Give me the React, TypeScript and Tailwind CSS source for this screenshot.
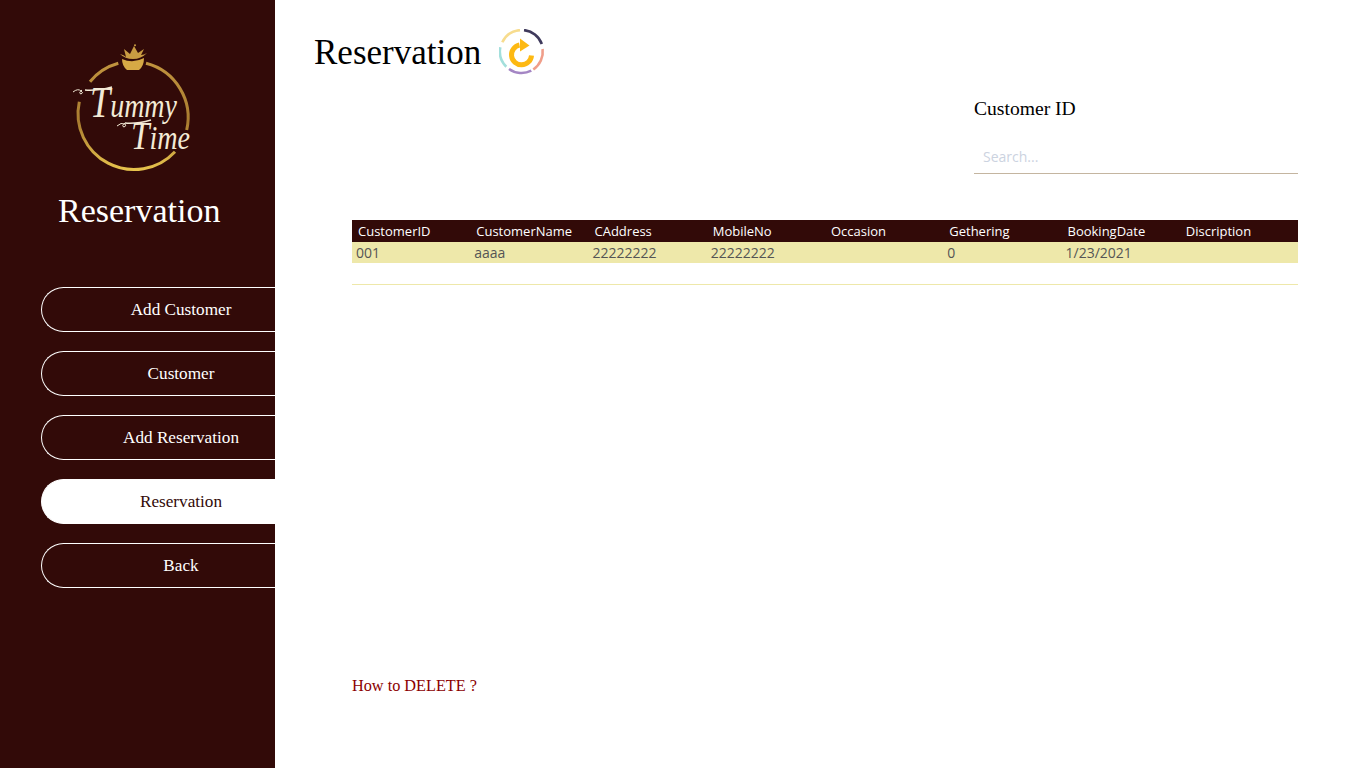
const serif = "font-['Liberation_Serif',serif]";

const navItems = [
  { label: "Add Customer", active: false },
  { label: "Customer", active: false },
  { label: "Add Reservation", active: false },
  { label: "Reservation", active: true },
  { label: "Back", active: false },
];

const headers = ["CustomerID", "CustomerName", "CAddress", "MobileNo", "Occasion", "Gethering", "BookingDate", "Discription"];
const row = ["001", "aaaa", "22222222", "22222222", "", "0", "1/23/2021", ""];

const Logo = () => {
  const font = "'Liberation Serif', serif";
  return (
    <svg width="134" height="132" viewBox="0 0 134 132" className="block">
      <defs>
        <linearGradient id="gold" gradientUnits="userSpaceOnUse" x1="0" y1="15" x2="0" y2="130">
          <stop offset="0" stopColor="#c2953f" />
          <stop offset="0.55" stopColor="#a97c30" />
          <stop offset="1" stopColor="#ecc94f" />
        </linearGradient>
      </defs>
      <path d="M47.3 19.3A56 56 0 0 0 19 37.7" fill="none" stroke="url(#gold)" strokeWidth="3" />
      <path d="M75 19.3A56 56 0 0 1 115.7 86" fill="none" stroke="url(#gold)" strokeWidth="3" />
      <path d="M104 107.7A56 56 0 0 1 8.3 57.7" fill="none" stroke="url(#gold)" strokeWidth="3" />
      <path d="M49 10Q53 11 55 13L53 5L59 10L63 2L67 9L73 5L70 11Q73 11 76 9Q70 15 62 15Q54 15 49 10z" fill="#c99c42" />
      <circle cx="64" cy="1.2" r="1" fill="#c99c42" />
      <path d="M51 15Q62 20 73 14Q73 22 68 26L56 26Q51 22 51 15z" fill="#d6a945" />

      <path d="M14 46Q26 47 41 43" fill="none" stroke="#f3ead6" strokeWidth="1.4" />
      <path d="M2 48Q7 44 10 47Q13 49 10 50Q7 49 11 46" fill="none" stroke="#f3ead6" strokeWidth="1" />
      <text x="19" y="73" fontFamily={font} fontStyle="italic" fill="#f3ead6" textLength="87" lengthAdjust="spacingAndGlyphs">
        <tspan fontSize="44">T</tspan>
        <tspan fontSize="34">ummy</tspan>
      </text>

      <path d="M54 79Q66 80 80 76" fill="none" stroke="#f3ead6" strokeWidth="1.4" />
      <path d="M46 82Q50 78 54 80Q56 82 53 83Q50 82 54 79" fill="none" stroke="#f3ead6" strokeWidth="1" />
      <text x="60" y="105" fontFamily={font} fontStyle="italic" fill="#f3ead6" textLength="59" lengthAdjust="spacingAndGlyphs">
        <tspan fontSize="40">T</tspan>
        <tspan fontSize="34">ime</tspan>
      </text>
    </svg>
  );
};

const RefreshIcon = () => (
  <svg width="46" height="46" viewBox="0 0 46 46" fill="none" className="block">
    <path d="M3.3 13.3A21.5 21.5 0 0 1 21 1.1" stroke="#f7dc8e" strokeWidth="2.6" />
    <path d="M25 1.1A21.5 21.5 0 0 1 42.8 15" stroke="#3f3a5c" strokeWidth="2.6" />
    <path d="M43.6 20A21.5 21.5 0 0 1 34.3 40.5" stroke="#f09e8a" strokeWidth="2.6" />
    <path d="M32.3 41.7A21.5 21.5 0 0 1 10 40" stroke="#a486c4" strokeWidth="2.6" />
    <path d="M7.3 37.7A21.5 21.5 0 0 1 1.3 18.3" stroke="#a3dfdc" strokeWidth="2.6" />
    <path d="M32.5 26.5A10 10 0 1 1 20.5 16" stroke="#fdb913" strokeWidth="5" />
    <path d="M21 9.5L30.5 16.5L21 22.5z" fill="#fdb913" />
  </svg>
);

const App = () => {
  return (
    <div className="flex h-[768px] w-[1366px] overflow-hidden bg-white">
      <aside className="w-[275px] shrink-0 overflow-hidden bg-[#320a08] pt-[44px]">
        <div className="ml-[71px]">
          <Logo />
        </div>
        <h2 className={`${serif} mt-[16px] ml-[58px] text-[34px] leading-[38px] text-white`}>Reservation</h2>
        <nav className="mt-[57px] ml-[41px] flex w-[279px] flex-col gap-[19px]">
          {navItems.map((item) => (
            <button
              key={item.label}
              className={`${serif} h-[45px] rounded-l-full border-y border-l border-white text-center text-[17.2px] ${
                item.active ? "bg-white text-[#320a08]" : "text-white"
              }`}
            >
              {item.label}
            </button>
          ))}
        </nav>
      </aside>

      <main className="flex-1 pr-[68px]">
        <div className="ml-[39px] flex items-center gap-[18px] pt-[28px]">
          <h1 className={`${serif} pt-[2px] text-[35px] leading-[46px] text-black`}>Reservation</h1>
          <RefreshIcon />
        </div>

        <div className="mt-[21px] ml-auto w-[324px]">
          <label className={`${serif} block text-[19.6px] leading-[24px] text-black`}>Customer ID</label>
          <input
            placeholder="Search..."
            className="mt-[20px] h-[33px] w-full border-b border-[#c4b5a0] px-[9px] pb-[2px] font-['Open_Sans',sans-serif] text-[14px] outline-none placeholder:text-[#ccd3df]"
          />
        </div>

        <div className="mt-[46px] ml-[77px] font-['Open_Sans',sans-serif]">
          <div className="grid h-[22px] grid-cols-8 items-center bg-[#320a08] pt-[1px] text-[13px] text-white">
            {headers.map((h) => (
              <span key={h} className="pl-[6px]">{h}</span>
            ))}
          </div>
          <div className="grid h-[21px] grid-cols-8 items-center bg-[#eee8aa] text-[14px] text-[#555555]">
            {row.map((c, i) => (
              <span key={i} className="pl-[4px]">{c}</span>
            ))}
          </div>
          <div className="h-[22px] border-b border-[#eee8aa]"></div>
        </div>

        <p className={`${serif} mt-[392px] ml-[77px] text-[16.25px] leading-[18px] text-[#8b0000]`}>How to DELETE ?</p>
      </main>
    </div>
  );
};

export default App;
